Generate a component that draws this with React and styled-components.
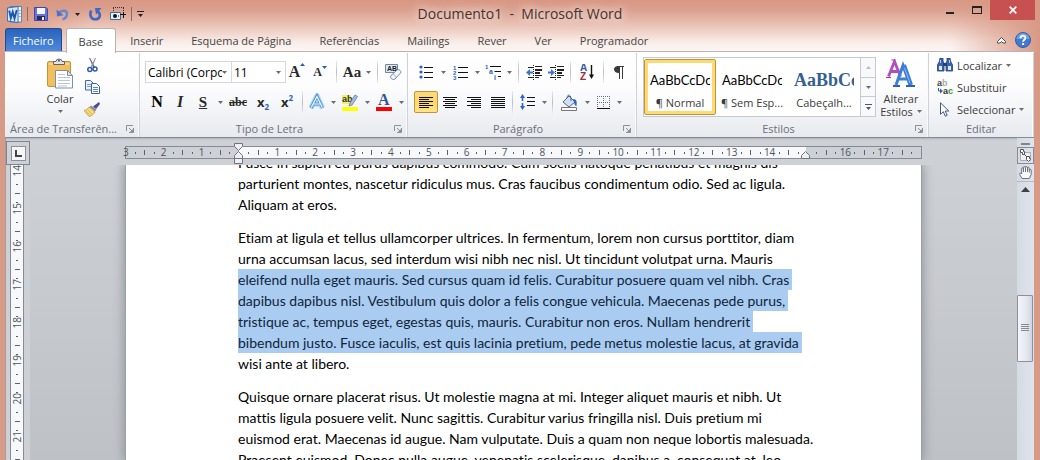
import React from 'react';
import styled, { createGlobalStyle, css } from 'styled-components';

const GlobalStyle = createGlobalStyle`
    * {
        box-sizing: border-box;
    }
    body {
        margin: 0;
        font-family: "Open Sans", "Noto Sans", sans-serif;
        font-size: 11px;
        color: #3b3b3b;
    }
    button, select {
        margin: 0;
        padding: 0;
        border: none;
        background: none;
        font: inherit;
        color: inherit;
    }
    svg {
        display: block;
        flex: none;
    }
`;

const Window = styled.div`
    display: flex;
    flex-direction: column;
    height: 100vh;
    min-height: 300px;
    overflow: hidden;
    padding: 0 5px;
    background:
        linear-gradient(90deg, #d89985 0, rgba(216, 153, 133, 0) 90px) 0 0 / 100% 52px no-repeat,
        linear-gradient(270deg, #d89985 0, rgba(216, 153, 133, 0) 90px) 0 0 / 100% 52px no-repeat,
        linear-gradient(#d89783 0, #dba08f 10px, #ecc9be 28px, #f8ece7 42px, #fdf8f6 52px) 0 0 / 100% 52px no-repeat,
        #d79a87;
`;

/* title bar */

const TitleBar = styled.header`
    display: grid;
    grid-template-columns: 1fr auto 1fr;
    flex: none;
    height: 28px;
    margin: 0 -5px;
    padding: 0 5px;
`;

const QuickAccess = styled.div`
    display: flex;
    align-items: center;
    gap: 7px;
    padding-left: 2px;
`;

const QuickButton = styled.button`
    display: flex;
    align-items: center;
    justify-content: center;
    gap: 6px;
    height: 22px;
    min-width: 16px;
`;

const QuickDivider = styled.span`
    width: 1px;
    height: 14px;
    margin: 0 -2px;
    background: #8d6b62;
`;

const Title = styled.h1`
    margin: 0;
    font-size: 14px;
    line-height: 28px;
    font-weight: 400;
    white-space: pre;
    color: #45332e;
    text-shadow: 0 0 8px #fff3ee, 0 0 12px #f6ddd5;
`;

const WindowButtons = styled.div`
    display: flex;
    justify-content: flex-end;
    align-items: flex-start;
`;

const WindowButton = styled.button`
    display: flex;
    align-items: center;
    justify-content: center;
    width: ${({ $close }) => ($close ? 45 : 27)}px;
    height: 20px;
    background: ${({ $close }) => ($close ? '#c75050' : 'transparent')};
`;

/* tabs */

const TabBar = styled.nav`
    display: flex;
    flex: none;
    height: 24px;
`;

const Tab = styled.button`
    height: 24px;
    padding: 0 14px;
    color: #444;
    white-space: nowrap;
    ${({ $file }) => $file && css`
        margin-right: 4px;
        padding: 0 7px;
        border: 1px solid #1b4b9b;
        border-bottom: none;
        border-radius: 3px 3px 0 0;
        background: linear-gradient(#2a62b9, #3f7bd0 60%, #4f8ce0);
        color: #fff;
    `}
    ${({ $active }) => $active && css`
        position: relative;
        height: 25px;
        padding: 0 12px;
        border: 1px solid #b5b2b4;
        border-bottom: none;
        border-radius: 3px 3px 0 0;
        background: #fff;
    `}
`;

const TabTools = styled.div`
    display: flex;
    align-items: center;
    gap: 9px;
    margin-left: auto;
    padding-right: 4px;
`;

/* ribbon */

const Ribbon = styled.div`
    display: flex;
    flex: none;
    height: 87px;
    margin-top: -1px;
    margin-right: 1px;
    padding-top: 1px;
    border-top: 1px solid #b9b5b7;
    border-bottom: 1px solid #868b92;
    background: linear-gradient(#fff 0, #fdfdfe 40%, #f0f2f5 75%, #e7eaee 100%);
`;

const Group = styled.section`
    display: flex;
    flex-direction: column;
    flex: ${({ $width, $grow }) => ($grow ? `1 0 ${$width}px` : `0 0 ${$width}px`)};
    padding-top: 1px;
    border-right: 1px solid #cfd3d9;
    box-shadow: inset -1px 0 #fafbfc;
`;

const GroupBody = styled.div`
    display: flex;
    flex: 1;
    flex-direction: ${({ $column }) => ($column ? 'column' : 'row')};
    padding-top: ${({ $flush }) => ($flush ? 0 : 3)}px;
    padding-left: ${({ $indent }) => $indent}px;
`;

const GroupLabel = styled.footer`
    display: flex;
    align-items: center;
    height: 17px;
    padding: 0 5px;
    color: #6b6f7b;
    white-space: nowrap;
    span {
        flex: 1;
        text-align: ${({ $left }) => ($left ? 'left' : 'center')};
    }
`;

const ToolRow = styled.div`
    display: flex;
    align-items: center;
    height: 30px;
`;

const Tool = styled.button`
    display: flex;
    align-items: center;
    justify-content: center;
    width: ${({ $width }) => $width || 24}px;
    height: 22px;
    ${({ $pressed }) => $pressed && css`
        border: 1px solid #c29437;
        border-radius: 2px;
        background: linear-gradient(#fbd97f, #fdd768 50%, #ffe68c);
    `}
`;

const ToolIcon = styled.span`
    display: flex;
    flex: 1;
    justify-content: center;
`;

const ToolCaret = styled.span`
    display: flex;
    justify-content: center;
    width: 10px;
`;

const Divider = styled.span`
    display: flex;
    justify-content: center;
    width: ${({ $width }) => $width}px;
    height: 22px;
    &::after {
        content: "";
        width: 1px;
        background: linear-gradient(#e8eaed, #b9bdc4 50%, #e8eaed);
    }
`;

const Combo = styled.label`
    display: flex;
    align-items: center;
    width: ${({ $width }) => $width}px;
    height: 22px;
    margin-left: ${({ $joined }) => ($joined ? -1 : 0)}px;
    padding-right: 4px;
    border: 1px solid #d5d8dd;
    background: #fff;
    color: #000;
    font-size: 12px;
    select {
        flex: 1;
        min-width: 0;
        height: 20px;
        padding-left: 2px;
        appearance: none;
        overflow: hidden;
        text-overflow: clip;
    }
`;

const BigTool = styled.button`
    display: flex;
    flex-direction: column;
    align-items: center;
    width: ${({ $width }) => $width}px;
    line-height: 13px;
`;

const BigToolIcon = styled.span`
    display: flex;
    align-items: flex-end;
    height: ${({ $height }) => $height}px;
    margin-bottom: 3px;
`;

const BigToolText = styled.span`
    display: flex;
    align-items: center;
    gap: 4px;
    height: 13px;
`;

const SmallTools = styled.div`
    display: flex;
    flex-direction: column;
`;

const EditTool = styled.button`
    display: flex;
    align-items: center;
    gap: 4px;
    height: 22px;
    white-space: nowrap;
`;

/* style gallery */

const Gallery = styled.div`
    display: flex;
    height: 60px;
    border: 1px solid #c6cad0;
    background: #fff;
`;

const StyleCard = styled.button`
    display: flex;
    flex-direction: column;
    width: 72px;
    height: 56px;
    margin-top: 1px;
    padding: 0 3px;
    border-radius: 2px;
    border: 1px solid ${({ $active }) => ($active ? '#c2933a' : 'transparent')};
    box-shadow: ${({ $active }) => ($active ? 'inset 0 0 0 3px #fddb74' : 'none')};
`;

const StyleSample = styled.span`
    align-self: stretch;
    height: 34px;
    margin: 0 2px;
    overflow: hidden;
    white-space: nowrap;
    text-align: left;
    line-height: 40px;
    font-family: ${({ $heading }) => ($heading ? '"Liberation Serif", serif' : 'Lato, sans-serif')};
    font-size: ${({ $heading }) => ($heading ? 18 : 13)}px;
    font-weight: ${({ $heading }) => ($heading ? 700 : 400)};
    color: ${({ $heading }) => ($heading ? '#365f91' : '#000')};
`;

const StyleName = styled.span`
    align-self: stretch;
    line-height: 18px;
    text-align: center;
    white-space: nowrap;
`;

const GalleryScroll = styled.div`
    display: flex;
    flex-direction: column;
    width: 15px;
    button {
        display: flex;
        flex: 1;
        align-items: center;
        justify-content: center;
        border-left: 1px solid #c6cad0;
        border-bottom: 1px solid #c6cad0;
        background: #f8f9fb;
    }
    button:last-child {
        border-bottom: none;
    }
`;

/* workspace */

const Workspace = styled.main`
    display: grid;
    grid-template-columns: 24px 1fr 17px;
    flex: 1;
    min-height: 0;
    margin-right: 1px;
    border-left: 1px solid #a9999a;
    background: #cdd0d5;
    box-shadow: inset 0 2px 2px -1px #b0b4ba;
`;

const LeftColumn = styled.div`
    display: flex;
    flex-direction: column;
    min-height: 0;
    padding-top: 3px;
`;

const TabStop = styled.button`
    display: flex;
    flex: none;
    align-items: center;
    justify-content: center;
    height: 24px;
    border: 1px solid #7f858f;
    span {
        display: flex;
        align-items: center;
        justify-content: center;
        width: 15px;
        height: 15px;
        border: 1px solid #8b919b;
        background: #f4f5f7;
    }
`;

const VerticalRuler = styled.div`
    display: flex;
    flex: 1;
    flex-direction: column;
    width: 14px;
    margin-left: 4px;
    overflow: hidden;
    border: solid #858b96;
    border-width: 0 1px;
    background: #f7f8fa;
`;

const RulerUnit = styled.div`
    display: flex;
    flex: none;
    flex-direction: column;
    align-items: center;
    justify-content: space-between;
    height: 38px;
    color: #4f545d;
    font-size: 10px;
    line-height: 12px;
    span {
        writing-mode: vertical-rl;
        transform: rotate(180deg);
    }
`;

const Mark = styled.i`
    display: block;
    width: ${({ $w }) => $w}px;
    height: ${({ $h }) => $h}px;
    background: #5b6069;
`;

const Center = styled.div`
    display: flex;
    flex-direction: column;
    min-width: 0;
    min-height: 0;
`;

const RulerStrip = styled.div`
    display: flex;
    flex: none;
    justify-content: center;
    height: 27px;
    padding-top: 8px;
`;

const Ruler = styled.div`
    position: relative;
    width: 797px;
    height: 13px;
    border: 1px solid #858b96;
    background: linear-gradient(90deg, transparent 113px, #f7f8fa 113px, #f7f8fa 680px, transparent 680px);
`;

const RulerTicks = styled.div`
    display: flex;
    align-items: center;
    height: 11px;
    margin: 0 -5px;
    font-size: 10px;
    line-height: 11px;
    color: #4f545d;
    span {
        display: flex;
        flex: 1 1 0;
        justify-content: center;
        min-width: 0;
    }
`;

const Indent = styled.div`
    position: absolute;
    left: ${({ $at }) => $at}px;
    top: ${({ $top }) => $top}px;
`;

const Canvas = styled.div`
    display: flex;
    flex: 1;
    justify-content: center;
    min-height: 0;
    overflow: hidden;
    background: linear-gradient(#cdd0d5, #bec1c6);
`;

const Page = styled.article`
    width: 797px;
    overflow: hidden;
    padding: 0 110px 0 112px;
    background: #fff;
    border: solid #9ba0a7;
    border-width: 0 1px;
    box-shadow: 0 0 10px 1px #8e9299;
    font-family: Lato, sans-serif;
    font-size: 14px;
    font-variant-ligatures: none;
    line-height: 21px;
    color: #000;
    p {
        margin: 0 0 12px;
        white-space: nowrap;
    }
    p:first-child {
        margin-top: -13px;
    }
`;

const Line = styled.span`
    display: block;
`;

const Selected = styled.mark`
    display: inline-block;
    padding-right: 3px;
    background: #a9ccf0;
    color: #10243c;
`;

const Scrollbar = styled.div`
    display: flex;
    flex-direction: column;
    align-items: stretch;
    padding-top: 5px;
    background: linear-gradient(90deg, #d6dae3, #dfe3ec);
    button {
        display: flex;
        flex: none;
        align-items: center;
        justify-content: center;
    }
`;

const SplitHandle = styled.button`
    height: 2px;
    margin: 0 4px;
    background: #80858e;
`;

const ScrollTool = styled.button`
    height: 17px;
    border: ${({ $framed }) => ($framed ? '1px solid #868c96' : 'none')};
    margin-top: ${({ $framed }) => ($framed ? 2 : 0)}px;
`;

const ScrollArrow = styled.button`
    height: 15px;
    border-top: 1px solid #b4b9c4;
`;

const ScrollTrack = styled.div`
    display: flex;
    flex: 1;
    flex-direction: column;
    justify-content: center;
`;

const Thumb = styled.button`
    width: 16px;
    height: 67px;
    border: 1px solid #8a90a0;
    border-radius: 1px;
    background: linear-gradient(90deg, #f3f5f9, #e4e7ef 60%, #cfd4de);
`;

/* icons */

const Caret = ({ color = '#6d6d6d' }) => (
    <svg width="5" height="3" viewBox="0 0 5 3"><path d="M0 0h5L2.5 3z" fill={color} /></svg>
);

const Launcher = () => (
    <svg width="8" height="8" viewBox="0 0 8 8" fill="none" stroke="#8c9099">
        <path d="M.5 6V.5H7M3 3l3.500 3.500M7.500 3v4.500H3" />
        <path d="M7 4v3H4z" fill="#8c9099" stroke="none" />
    </svg>
);

const WordIcon = () => (
    <svg width="15" height="17" viewBox="0 0 17 17" preserveAspectRatio="none">
        <path d="M3.500.500h13v15.500h-13z" fill="#eef4fc" stroke="#4a7fc4" />
        <path d="M.5 2l12-1.500v16L.5 15z" fill="#d9e8fa" stroke="#2a65b2" />
        <path d="M2.500 4.500l1.800 7.500 2.200-6 2 6.500L11 4" fill="none" stroke="#1d56a8" strokeWidth="2.200" />
        <path d="M13.500 4.500h2M13.500 7.500h2M13.500 10.500h2" stroke="#7fa6dc" />
    </svg>
);

const SaveIcon = () => (
    <svg width="14" height="14" viewBox="0 0 14 14">
        <path d="M.5.500h11.500l1.500 1.500v11.500H.5z" fill="#6a74d4" stroke="#4048a5" />
        <path d="M3 1h8v6H3z" fill="#f2f6ff" />
        <path d="M3 9h8v4H3z" fill="#262a60" />
        <path d="M8 10h2v3H8z" fill="#e8ecf8" />
    </svg>
);

const UndoIcon = () => (
    <svg width="13" height="13" viewBox="0 0 13 13">
        <path d="M3 5C5 2 11 1.500 11 6c0 2.500-2 4.500-4.500 5.500" fill="none" stroke="#6088d4" strokeWidth="2.400" />
        <path d="M.5 1.500l.5 7 6.500-1.200z" fill="#4a72cb" />
    </svg>
);

const RedoIcon = () => (
    <svg width="13" height="13" viewBox="0 0 13 13">
        <path d="M2.200 2.500C0 7.500 2.500 11.300 6.500 11.300S12.500 7 9 3.500" fill="none" stroke="#3f67c6" strokeWidth="2.600" />
        <path d="M6 0h6.500L7 6.500z" fill="#3f67c6" />
    </svg>
);

const ShapeIcon = () => (
    <svg width="16" height="14" viewBox="0 0 16 14">
        <path d="M3 .5h11M3.500 1v4M13.500 1v4" stroke="#333" strokeDasharray="1 1" fill="none" />
        <path d="M.5 5.500h10v7H.5z" fill="#e6eef8" stroke="#46698f" />
        <circle cx="5" cy="9" r="2" fill="#111" />
        <path d="M8 9h1M10 7.500h6M13.500 5v6" stroke="#111" />
    </svg>
);

const MoreIcon = ({ color = '#222' }) => (
    <svg width="7" height="6" viewBox="0 0 7 6"><path d="M0 0h7v1H0zM1 3h5L3.500 6z" fill={color} /></svg>
);

const MinimizeIcon = () => (
    <svg width="8" height="8" viewBox="0 0 8 8"><path d="M0 6h8v2H0z" fill="#222" /></svg>
);

const MaximizeIcon = () => (
    <svg width="10" height="8" viewBox="0 0 10 8"><path d="M0 0h10v8H0zM1 2v5h8V2z" fill="#222" fillRule="evenodd" /></svg>
);

const CloseIcon = () => (
    <svg width="8" height="8" viewBox="0 0 8 8"><path d="M.7.7l6.600 6.600M7.300.7L.7 7.300" stroke="#fff" strokeWidth="1.700" /></svg>
);

const CollapseIcon = () => (
    <svg width="9" height="7" viewBox="0 0 9 7">
        <path d="M.5 4.500l4-4 4 4v1.500H6L4.500 4.500 3 6H.5z" fill="#fff" stroke="#4c4c55" />
    </svg>
);

const HelpIcon = () => (
    <svg width="16" height="16" viewBox="0 0 16 16">
        <circle cx="8" cy="8" r="7.500" fill="#3f7bd3" stroke="#2b5fae" />
        <path d="M1.500 7a6.500 6 0 0 1 13 0z" fill="#6c9ee6" />
        <path d="M5.500 6.300C5.500 2.800 10.600 3 10.400 6c0 1.700-2.300 1.800-2.300 3.700" fill="none" stroke="#fff" strokeWidth="1.800" />
        <path d="M7.100 11h2v2h-2z" fill="#fff" />
    </svg>
);

const PasteIcon = () => (
    <svg width="27" height="31" viewBox="0 0 27 31">
        <rect x=".5" y="3.500" width="23" height="25" rx="1.500" fill="#f2bf5e" stroke="#c9913a" />
        <path d="M2 5h20v2H2z" fill="#f9d48b" />
        <path d="M6.500 6.500v-3H9a3 2.500 0 0 1 6 0h2.500v3z" fill="#e2e4e8" stroke="#5d636d" />
        <circle cx="12" cy="2.800" r="1" fill="#50555e" />
        <path d="M8.500 12.500h12l5 5v12.500h-17z" fill="#fff" stroke="#7d8fae" />
        <path d="M20.500 12.500v5h5z" fill="#dfe6f1" stroke="#7d8fae" />
        <path d="M11 16.500h7M11 19.500h12M11 22.500h12M11 25.500h12M11 28h9" stroke="#b9c6dc" />
    </svg>
);

const CutIcon = () => (
    <svg width="11" height="15" viewBox="0 0 11 15">
        <path d="M2 0l1 0 5 9-1.500 1z" fill="#5f6b7d" />
        <path d="M9 0L8 0 3.500 9l1.500 1z" fill="#8592a5" />
        <circle cx="2.800" cy="11.500" r="2" fill="none" stroke="#2e5cb0" strokeWidth="1.500" />
        <circle cx="8" cy="11" r="2" fill="none" stroke="#2e5cb0" strokeWidth="1.500" />
    </svg>
);

const CopyIcon = () => (
    <svg width="15" height="14" viewBox="0 0 15 14">
        <path d="M.5.500h5l2.500 2.500v7H.5z" fill="#eaf2fd" stroke="#4168ad" />
        <path d="M2 4.500h4M2 6.500h4" stroke="#7fa0d6" />
        <path d="M6.500 3.500h5l3 3v7h-8z" fill="#f6faff" stroke="#3960a8" />
        <path d="M8 7.500h5M8 9.500h5M8 11.500h5" stroke="#5c88cc" />
    </svg>
);

const BrushIcon = () => (
    <svg width="16" height="15" viewBox="0 0 16 15">
        <path d="M15 0l1 2-4 5-3-2.500z" fill="#4a4a9a" />
        <path d="M7 3.500l5.500 4L11 9.500 5.500 5z" fill="#8a8d95" />
        <path d="M5 5l6 5c-2 3-4 4-6 4.500L0 8.500C2 8 4 7 5 5z" fill="#f5dc7e" stroke="#b48a35" strokeWidth=".7" />
        <path d="M2 9l4 4M4 8l4 4" stroke="#cfa64a" strokeWidth=".7" />
    </svg>
);

const Glyph = styled.span`
    font-family: "Liberation Serif", serif;
    font-size: ${({ $size }) => $size || 16}px;
    line-height: 18px;
    font-weight: 700;
    font-style: ${({ $italic }) => ($italic ? 'italic' : 'normal')};
    text-decoration: ${({ $line }) => $line || 'none'};
    color: ${({ $color }) => $color || '#2a2a2a'};
    sub, sup {
        font-size: 8px;
        line-height: 8px;
        color: #2f5fb5;
    }
    sub {
        vertical-align: -3px;
    }
    sup {
        vertical-align: 6px;
    }
`;

const SansGlyph = styled(Glyph)`
    font-family: "Open Sans", sans-serif;
`;

const SizeGlyph = styled.span`
    display: flex;
    align-items: ${({ $small }) => ($small ? 'center' : 'flex-start')};
`;

const Triangle = ({ down }) => (
    <svg width="5" height="12" viewBox="0 0 5 12">
        <path d={down ? 'M0 0h5L2.500 3z' : 'M0 3h5L2.500 0z'} fill="#2f5ea8" />
    </svg>
);

const EraserIcon = () => (
    <svg width="18" height="18" viewBox="0 0 18 18">
        <path d="M1.500 1.500h12v8h-12z" fill="#dfe9f6" stroke="#6d87ad" />
        <text x="3" y="8" fontFamily="Liberation Sans" fontWeight="700" fontSize="7" fill="#222">AB</text>
        <path d="M7 12.500l6-5.500c2-1 5 1 3.500 3L11 16c-2.500 1.500-5.500-1-4-3.500z" fill="#f4f7fc" stroke="#7088ad" />
        <path d="M8.500 11.500c1.500 0 3 1 3.500 3" fill="none" stroke="#9db0cf" />
    </svg>
);

const EffectIcon = () => (
    <svg width="18" height="18" viewBox="0 0 18 18">
        <path d="M3 15L9 3l5.500 12M5.500 11h7" fill="none" stroke="#b4daf6" strokeWidth="5.500" strokeLinejoin="round" />
        <path d="M3 15L9 3l5.500 12M5.500 11h7" fill="none" stroke="#4d94d4" strokeWidth="3" />
        <path d="M3.200 14.500L9 3.500l5.300 11M5.500 11h7" fill="none" stroke="#f4faff" strokeWidth="1.200" />
    </svg>
);

const HighlightIcon = () => (
    <svg width="17" height="17" viewBox="0 0 17 17">
        <path d="M0 1h9v9H0z" fill="#f4ee6a" />
        <text x="0" y="8" fontFamily="Liberation Sans" fontWeight="700" fontSize="9" fill="#333">ab</text>
        <path d="M8 9l5-8 2.500 1.500L10 11l-3 1z" fill="#a9bfdf" stroke="#5b77a4" strokeWidth=".8" />
        <path d="M0 13h16v4H0z" fill="#ffff00" />
    </svg>
);

const FontColorIcon = () => (
    <svg width="16" height="17" viewBox="0 0 16 17">
        <text x="2" y="11" fontFamily="Liberation Serif" fontWeight="700" fontSize="16" fill="#2f5597">A</text>
        <path d="M0 13h16v4H0z" fill="#ff0000" />
    </svg>
);

const dots = [2, 7, 12];

const BulletsIcon = () => (
    <svg width="14" height="14" viewBox="0 0 14 14">
        {dots.map((y) => <circle key={y} cx="2" cy={y} r="1.600" fill="#2f60b4" />)}
        <path d="M5 2.500h9M5 7.500h9M5 12.500h9" stroke="#111" />
    </svg>
);

const NumbersIcon = () => (
    <svg width="15" height="15" viewBox="0 0 15 15">
        <text x="0" y="5" fontFamily="Liberation Sans" fontWeight="700" fontSize="6" fill="#2f60b4">1</text>
        <text x="0" y="10" fontFamily="Liberation Sans" fontWeight="700" fontSize="6" fill="#2f60b4">2</text>
        <text x="0" y="15" fontFamily="Liberation Sans" fontWeight="700" fontSize="6" fill="#2f60b4">3</text>
        <path d="M5 2.500h10M5 7.500h10M5 12.500h10" stroke="#111" />
    </svg>
);

const MultiLevelIcon = () => (
    <svg width="17" height="16" viewBox="0 0 17 16">
        <text x="0" y="5" fontFamily="Liberation Sans" fontWeight="700" fontSize="6" fill="#2f60b4">1</text>
        <text x="4" y="10" fontFamily="Liberation Sans" fontWeight="700" fontSize="7" fill="#2f60b4">a</text>
        <text x="9" y="16" fontFamily="Liberation Sans" fontWeight="700" fontSize="7" fill="#2f60b4">i</text>
        <path d="M5 2.500h11M9.500 7.500H16M13 12.500h3" stroke="#111" />
    </svg>
);

const IndentIcon = ({ right }) => (
    <svg width="16" height="15" viewBox="0 0 16 15">
        <path d="M2 2.500h5M2 12.500h5M9 1.500h7M9 12.500h4M9 10.500h7" stroke="#222" />
        <path d="M9 4h7v2H9zM9 7h5v2H9z" fill="#222" />
        <path d="M7.500 0v15" stroke="#222" strokeDasharray="1 1" />
        <path d={right ? 'M0 6.500h3V4l4 3.500-4 3.500V8.500H0z' : 'M7 6.500H4V4L0 7.500 4 11V8.500h3z'} fill="#3c74cf" />
    </svg>
);

const SortIcon = () => (
    <svg width="15" height="16" viewBox="0 0 15 16">
        <text x="0" y="7" fontFamily="Liberation Sans" fontWeight="700" fontSize="10" fill="#2f5cab">A</text>
        <text x="0" y="16" fontFamily="Liberation Sans" fontWeight="700" fontSize="10" fill="#a12a35">Z</text>
        <path d="M11.500 1v11" stroke="#111" strokeWidth="1.400" />
        <path d="M9 10.500h5L11.500 15z" fill="#111" />
    </svg>
);

const PilcrowIcon = () => (
    <svg width="10" height="13" viewBox="0 0 10 13">
        <path d="M10 0v1H9v12H8V1H6v12H5V7C-1.500 7-1.500 0 4 0z" fill="#3a3a3a" />
    </svg>
);

const alignLines = {
    left: 'M0 .5h14M0 2.500h10M0 4.500h14M0 6.500h10M0 8.500h14M0 10.500h10',
    center: 'M0 .5h14M2 2.500h10M0 4.500h14M2 6.500h10M0 8.500h14M2 10.500h10',
    right: 'M0 .5h14M4 2.500h10M0 4.500h14M4 6.500h10M0 8.500h14M4 10.500h10',
    justify: 'M0 .5h14M0 2.500h14M0 4.500h14M0 6.500h14M0 8.500h14M0 10.500h14',
};

const AlignIcon = ({ kind }) => (
    <svg width="14" height="11" viewBox="0 0 14 11"><path d={alignLines[kind]} stroke="#111" /></svg>
);

const SpacingIcon = () => (
    <svg width="15" height="16" viewBox="0 0 15 16">
        <path d="M0 4l2.500-4L5 4H3.300v3H1.700V4zM0 12l2.500 4L5 12H3.300V9H1.700v3z" fill="#2f65bd" />
        <path d="M7 3.500h8M7 7.500h8M7 11.500h8" stroke="#111" />
    </svg>
);

const BucketIcon = () => (
    <svg width="17" height="17" viewBox="0 0 17 17">
        <path d="M2 8l6-6 6 6-6 5z" fill="#d3e0f2" stroke="#4d6891" />
        <path d="M6 4c0-4 4-4 4 1v2" fill="none" stroke="#4d6891" />
        <path d="M12 5c4 0 4 3 3.500 7-2 0-2-3-2.500-4z" fill="#2f65bd" />
        <path d="M.5 13.500h15v3H.5z" fill="#fff" stroke="#777" />
    </svg>
);

const BorderIcon = () => (
    <svg width="13" height="13" viewBox="0 0 13 13">
        <path d="M0 .5h13M0 6.500h13M.5 0v12M6.500 0v12M12.500 0v12" stroke="#5f7290" strokeDasharray="1 1" />
        <path d="M0 12.500h13" stroke="#111" />
    </svg>
);

const StylesIcon = () => (
    <svg width="30" height="30" viewBox="0 0 30 30">
        <path d="M2.500 17.500L8.500 2.500l6 15M4.500 12.500h8" fill="none" stroke="#b14dbf" strokeWidth="2.800" />
        <path d="M0 18.500h5M5.500 1h4" stroke="#9a3aa9" />
        <path d="M10 26L17 6.500l7 19.500M12.500 20h10" fill="none" stroke="#3d7ed6" strokeWidth="3" />
        <path d="M18 6l7 20" stroke="#3d7ed6" strokeWidth="4" />
        <path d="M7 27h7M20 27h9" stroke="#2b62b8" strokeWidth="2" />
        <path d="M18.500 9l5.500 15" stroke="#8fbcf2" />
    </svg>
);

const FindIcon = () => (
    <svg width="16" height="14" viewBox="0 0 16 14">
        <path d="M3 0h3v3l1 2v8H.5V7L2.500 3zM13 0h-3v3L9 5v8h6.500V7l-2-4z" fill="#3a64a8" stroke="#1f3f78" strokeWidth=".8" />
        <path d="M6 5h4v3H6z" fill="#1f3f78" />
        <path d="M2 8h3v4H2zM11 8h3v4h-3z" fill="#dce8f8" />
        <path d="M3.500 2v3M12.500 2v3" stroke="#b9d0f0" />
    </svg>
);

const ReplaceIcon = () => (
    <svg width="16" height="16" viewBox="0 0 16 16">
        <text x="0" y="7" fontFamily="Liberation Sans" fontWeight="700" fontSize="9" fill="#444">a<tspan fill="#aaa">b</tspan></text>
        <path d="M1.500 9v3h2" fill="none" stroke="#2f60b4" />
        <path d="M3 9.500l3 2.500-3 2.500z" fill="#2f60b4" />
        <text x="6" y="15" fontFamily="Liberation Sans" fontWeight="700" fontSize="9" fill="#333">a<tspan fill="#2e9a3a">c</tspan></text>
    </svg>
);

const SelectIcon = () => (
    <svg width="16" height="15" viewBox="0 0 16 15">
        <path d="M3.500.8v11.500l2.800-2.600 2 4.500 1.900-.9-2-4.300h3.600z" fill="#fff" stroke="#405a86" />
    </svg>
);

const TabStopIcon = () => (
    <svg width="7" height="7" viewBox="0 0 7 7"><path d="M0 0h2v5h5v2H0z" fill="#444" /></svg>
);

const HourglassIcon = () => (
    <svg width="9" height="22" viewBox="0 0 9 22" fill="#eeeff2" stroke="#6f747d">
        <path d="M.5.500h8v3l-4 4-4-4zM.5 15.500v-3l4-4 4 4v3zM.5 15.500h8v5h-8z" />
    </svg>
);

const RightIndentIcon = () => (
    <svg width="9" height="8" viewBox="0 0 9 8" fill="#eeeff2" stroke="#6f747d">
        <path d="M.5 7.500v-3l4-4 4 4v3z" />
    </svg>
);

const RulerToggleIcon = () => (
    <svg width="13" height="13" viewBox="0 0 13 13" fill="#f4eef2" stroke="#4f545d">
        <path d="M1.500 3.500h10v8h-10z" stroke="#a9adb6" />
        <path d="M1.500.5h3v2h1v3h-2v-2h-2zM7.500 7.500h3v2h1v1l-2 2-2-2z" fill="#fff" />
        <path d="M5 5l3 3" />
    </svg>
);

const HandIcon = () => (
    <svg width="13" height="13" viewBox="0 0 13 13" fill="#f6f7f9" stroke="#6d727b">
        <path d="M3 12.500L.7 8.500c-.5-1.500 1-2 2-.5V2.500c0-1 1.500-1 1.500 0V1.500c0-1.200 2-1.200 2 0V1c0-1 2-1 2 0v1c0-1 2-1 2 0v2c0-1 2-1 2 0v4.500l-2 4z" />
        <path d="M4.500 2v4M6.500 1.500v4.500M8.500 2v4M10.300 3.500V6.500" />
    </svg>
);

const UpIcon = ({ color = '#3d4148', width = 9, height = 5 }) => (
    <svg width={width} height={height} viewBox="0 0 9 5"><path d="M0 5h9L4.500 0z" fill={color} /></svg>
);

const GripIcon = () => (
    <svg width="8" height="8" viewBox="0 0 8 8"><path d="M0 .5h8M0 2.500h8M0 4.500h8M0 6.500h8" stroke="#858a93" /></svg>
);

const IconTool = ({ label, width, pressed, caret, children }) => (
    <Tool type="button" aria-label={label} $width={width} $pressed={pressed}>
        <ToolIcon>{children}</ToolIcon>
        {caret && <ToolCaret><Caret /></ToolCaret>}
    </Tool>
);

const tabs = ['Inserir', 'Esquema de Página', 'Referências', 'Mailings', 'Rever', 'Ver', 'Programador'];

const aligns = ['left', 'center', 'right', 'justify'];

const styleCards = [
    { name: '¶ Normal', active: true },
    { name: '¶ Sem Esp...' },
    { name: 'Cabeçalh...', heading: true },
];

const paragraphs = [
    [
        { text: 'Fusce in sapien eu purus dapibus commodo. Cum sociis natoque penatibus et magnis dis' },
        { text: 'parturient montes, nascetur ridiculus mus. Cras faucibus condimentum odio. Sed ac ligula.' },
        { text: 'Aliquam at eros.' },
    ],
    [
        { text: 'Etiam at ligula et tellus ullamcorper ultrices. In fermentum, lorem non cursus porttitor, diam' },
        { text: 'urna accumsan lacus, sed interdum wisi nibh nec nisl. Ut tincidunt volutpat urna. Mauris' },
        { text: 'eleifend nulla eget mauris. Sed cursus quam id felis. Curabitur posuere quam vel nibh. Cras', selected: true },
        { text: 'dapibus dapibus nisl. Vestibulum quis dolor a felis congue vehicula. Maecenas pede purus,', selected: true },
        { text: 'tristique ac, tempus eget, egestas quis, mauris. Curabitur non eros. Nullam hendrerit', selected: true },
        { text: 'bibendum justo. Fusce iaculis, est quis lacinia pretium, pede metus molestie lacus, at gravida', selected: true },
        { text: 'wisi ante at libero.' },
    ],
    [
        { text: 'Quisque ornare placerat risus. Ut molestie magna at mi. Integer aliquet mauris et nibh. Ut' },
        { text: 'mattis ligula posuere velit. Nunc sagittis. Curabitur varius fringilla nisl. Duis pretium mi' },
        { text: 'euismod erat. Maecenas id augue. Nam vulputate. Duis a quam non neque lobortis malesuada.' },
        { text: 'Praesent euismod. Donec nulla augue, venenatis scelerisque, dapibus a, consequat at, leo.' },
    ],
];

// quarter-centimetre ticks, counted from three centimetres left of the margin
const rulerTicks = Array.from({ length: 85 }, (_, i) => i);

const renderTick = (i) => {
    const cm = Math.abs(i / 4 - 3);
    if (i % 4 === 0) {
        return cm === 0 || cm === 15 || cm === 18 ? null : cm;
    }
    return i % 4 === 2 ? <Mark $w={1} $h={5} /> : <Mark $w={1} $h={2} />;
};

const TitleSection = () => (
    <TitleBar>
        <QuickAccess>
            <WordIcon />
            <QuickDivider />
            <QuickButton type="button" aria-label="Guardar"><SaveIcon /></QuickButton>
            <QuickButton type="button" aria-label="Anular"><UndoIcon /><Caret color="#222" /></QuickButton>
            <QuickButton type="button" aria-label="Refazer"><RedoIcon /></QuickButton>
            <QuickButton type="button" aria-label="Formas"><ShapeIcon /></QuickButton>
            <QuickDivider />
            <MoreIcon />
        </QuickAccess>
        <Title>{'Documento1  -  Microsoft Word'}</Title>
        <WindowButtons>
            <WindowButton type="button" aria-label="Minimizar"><MinimizeIcon /></WindowButton>
            <WindowButton type="button" aria-label="Maximizar"><MaximizeIcon /></WindowButton>
            <WindowButton type="button" aria-label="Fechar" $close><CloseIcon /></WindowButton>
        </WindowButtons>
    </TitleBar>
);

const TabSection = () => (
    <TabBar>
        <Tab type="button" $file>Ficheiro</Tab>
        <Tab type="button" $active>Base</Tab>
        {tabs.map((name) => <Tab type="button" key={name}>{name}</Tab>)}
        <TabTools>
            <CollapseIcon />
            <HelpIcon />
        </TabTools>
    </TabBar>
);

const ClipboardGroup = () => (
    <Group $width={135}>
        <GroupBody $flush $indent={35}>
            <BigTool type="button" aria-label="Colar" $width={40}>
                <BigToolIcon $height={35}><PasteIcon /></BigToolIcon>
                <BigToolText>Colar</BigToolText>
                <BigToolText><Caret /></BigToolText>
            </BigTool>
            <SmallTools>
                <IconTool label="Cortar"><CutIcon /></IconTool>
                <IconTool label="Copiar"><CopyIcon /></IconTool>
                <IconTool label="Pincel de Formatação"><BrushIcon /></IconTool>
            </SmallTools>
        </GroupBody>
        <GroupLabel $left><span>Área de Transferên...</span><Launcher /></GroupLabel>
    </Group>
);

const FontGroup = () => (
    <Group $width={268}>
        <GroupBody $column $indent={5}>
            <ToolRow>
                <Combo $width={87}>
                    <select aria-label="Tipo de letra"><option>Calibri (Corpo)</option></select>
                    <Caret />
                </Combo>
                <Combo $width={55} $joined>
                    <select aria-label="Tamanho"><option>11</option></select>
                    <Caret />
                </Combo>
                <IconTool label="Aumentar" width={22}>
                    <SizeGlyph><Glyph $size={16}>A</Glyph><Triangle /></SizeGlyph>
                </IconTool>
                <IconTool label="Diminuir" width={24}>
                    <SizeGlyph $small><Glyph $size={12}>A</Glyph><Triangle down /></SizeGlyph>
                </IconTool>
                <Divider $width={9} />
                <IconTool label="Maiúsculas" width={32} caret><Glyph $size={15}>Aa</Glyph></IconTool>
                <Divider $width={9} />
                <IconTool label="Limpar formatação" width={22}><EraserIcon /></IconTool>
            </ToolRow>
            <ToolRow>
                <IconTool label="Negrito"><Glyph $color="#000">N</Glyph></IconTool>
                <IconTool label="Itálico" width={22}><Glyph $italic>I</Glyph></IconTool>
                <IconTool label="Sublinhado" width={34} caret><Glyph $size={15} $line="underline">S</Glyph></IconTool>
                <IconTool label="Rasurado" width={26}><Glyph $size={12} $line="line-through">abc</Glyph></IconTool>
                <IconTool label="Inferior à linha"><SansGlyph $size={13}>x<sub>2</sub></SansGlyph></IconTool>
                <IconTool label="Superior à linha"><SansGlyph $size={13}>x<sup>2</sup></SansGlyph></IconTool>
                <Divider $width={7} />
                <IconTool label="Efeitos de texto" width={32} caret><EffectIcon /></IconTool>
                <IconTool label="Realce" width={34} caret><HighlightIcon /></IconTool>
                <IconTool label="Cor do tipo de letra" width={34} caret><FontColorIcon /></IconTool>
            </ToolRow>
        </GroupBody>
        <GroupLabel><span>Tipo de Letra</span><Launcher /></GroupLabel>
    </Group>
);

const ParagraphGroup = () => (
    <Group $width={229}>
        <GroupBody $column $indent={6}>
            <ToolRow>
                <IconTool label="Marcas" width={34} caret><BulletsIcon /></IconTool>
                <IconTool label="Numeração" width={34} caret><NumbersIcon /></IconTool>
                <IconTool label="Lista com vários níveis" width={32} caret><MultiLevelIcon /></IconTool>
                <Divider $width={9} />
                <IconTool label="Diminuir avanço" width={22}><IndentIcon /></IconTool>
                <IconTool label="Aumentar avanço" width={22}><IndentIcon right /></IconTool>
                <Divider $width={7} />
                <IconTool label="Ordenar" width={26}><SortIcon /></IconTool>
                <Divider $width={7} />
                <IconTool label="Mostrar marcas"><PilcrowIcon /></IconTool>
            </ToolRow>
            <ToolRow>
                {aligns.map((kind) => (
                    <IconTool key={kind} label={kind} pressed={kind === 'left'}><AlignIcon kind={kind} /></IconTool>
                ))}
                <Divider $width={5} />
                <IconTool label="Espaçamento" width={34} caret><SpacingIcon /></IconTool>
                <Divider $width={7} />
                <IconTool label="Sombreado" width={36} caret><BucketIcon /></IconTool>
                <IconTool label="Limites" width={32} caret><BorderIcon /></IconTool>
            </ToolRow>
        </GroupBody>
        <GroupLabel><span>Parágrafo</span><Launcher /></GroupLabel>
    </Group>
);

const StylesGroup = () => (
    <Group $width={292}>
        <GroupBody $indent={6}>
            <Gallery>
                {styleCards.map(({ name, active, heading }) => (
                    <StyleCard type="button" key={name} $active={active}>
                        <StyleSample $heading={heading}>AaBbCcDc</StyleSample>
                        <StyleName>{name}</StyleName>
                    </StyleCard>
                ))}
                <GalleryScroll>
                    <button type="button" aria-label="Anterior"><UpIcon width={5} height={3} color="#b9bcc2" /></button>
                    <button type="button" aria-label="Seguinte"><Caret /></button>
                    <button type="button" aria-label="Mais"><MoreIcon color="#555" /></button>
                </GalleryScroll>
            </Gallery>
            <BigTool type="button" $width={50}>
                <BigToolIcon $height={32}><StylesIcon /></BigToolIcon>
                <BigToolText>Alterar</BigToolText>
                <BigToolText>Estilos <Caret /></BigToolText>
            </BigTool>
        </GroupBody>
        <GroupLabel><span>Estilos</span><Launcher /></GroupLabel>
    </Group>
);

const EditGroup = () => (
    <Group $width={105} $grow>
        <GroupBody $column $flush $indent={8}>
            <EditTool type="button"><FindIcon />Localizar <Caret /></EditTool>
            <EditTool type="button"><ReplaceIcon />Substituir</EditTool>
            <EditTool type="button"><SelectIcon />Seleccionar <Caret /></EditTool>
        </GroupBody>
        <GroupLabel><span>Editar</span></GroupLabel>
    </Group>
);

const SideRuler = () => (
    <LeftColumn>
        <TabStop type="button" aria-label="Tabulação"><span><TabStopIcon /></span></TabStop>
        <VerticalRuler>
            {[14, 15, 16, 17, 18, 19, 20, 21, 22, 23, 24, 25, 26, 27].map((cm) => (
                <RulerUnit key={cm}>
                    <span>{cm}</span>
                    <Mark $w={2} $h={1} />
                    <Mark $w={5} $h={1} />
                    <Mark $w={2} $h={1} />
                </RulerUnit>
            ))}
        </VerticalRuler>
    </LeftColumn>
);

const DocumentView = () => (
    <Center>
        <RulerStrip>
            <Ruler>
                <RulerTicks>
                    {rulerTicks.map((i) => <span key={i}>{renderTick(i)}</span>)}
                </RulerTicks>
                <Indent $at={108} $top={-4}><HourglassIcon /></Indent>
                <Indent $at={675} $top={4}><RightIndentIcon /></Indent>
            </Ruler>
        </RulerStrip>
        <Canvas>
            <Page>
                {paragraphs.map((lines) => (
                    <p key={lines[0].text}>
                        {lines.map(({ text, selected }) => (
                            <Line key={text}>{selected ? <Selected>{text}</Selected> : text}</Line>
                        ))}
                    </p>
                ))}
            </Page>
        </Canvas>
    </Center>
);

const SideScroll = () => (
    <Scrollbar>
        <SplitHandle type="button" aria-label="Dividir" />
        <ScrollTool type="button" aria-label="Régua" $framed><RulerToggleIcon /></ScrollTool>
        <ScrollTool type="button" aria-label="Mover"><HandIcon /></ScrollTool>
        <ScrollArrow type="button" aria-label="Para cima"><UpIcon /></ScrollArrow>
        <ScrollTrack>
            <Thumb type="button" aria-label="Posição"><GripIcon /></Thumb>
        </ScrollTrack>
    </Scrollbar>
);

const App = () => (
    <>
        <GlobalStyle />
        <Window>
            <TitleSection />
            <TabSection />
            <Ribbon>
                <ClipboardGroup />
                <FontGroup />
                <ParagraphGroup />
                <StylesGroup />
                <EditGroup />
            </Ribbon>
            <Workspace>
                <SideRuler />
                <DocumentView />
                <SideScroll />
            </Workspace>
        </Window>
    </>
);

export default App;
